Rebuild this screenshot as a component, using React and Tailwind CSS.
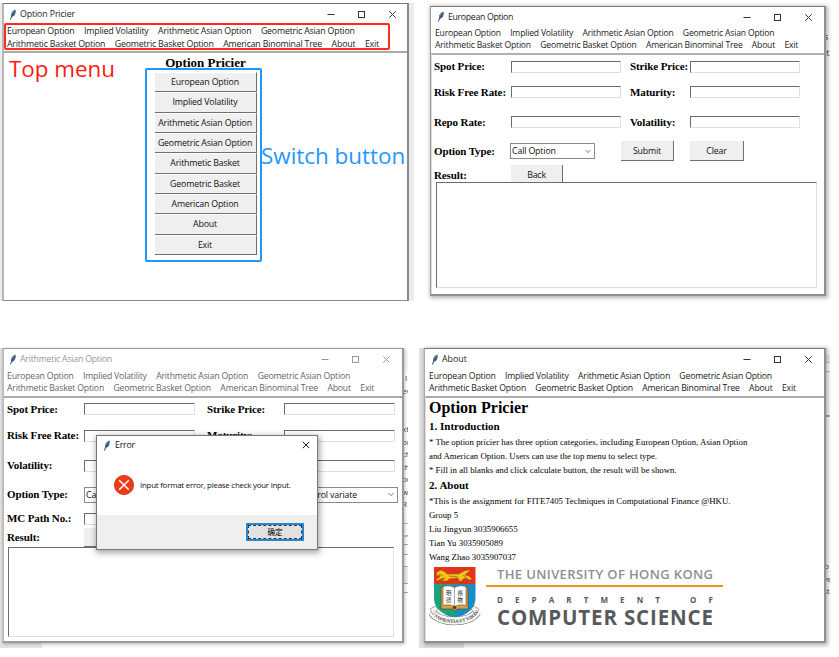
import React from "react";

const SANS = "font-['Open_Sans','Noto_Sans',sans-serif]";

function Feather() {
  return (
    <svg viewBox="0 0 8 12" className="h-[11px] w-[8px] shrink-0">
      <path d="M1.2 11.5 L2 8.5 C1 5 3.5 1.5 6.8 0.6 C7.6 4 6 8 2.6 8.8 Z" fill="#3f6288" />
      <path d="M2.4 8.6 C1.8 5 3.6 2.6 6 1.2 C4.6 3.4 3.6 5.6 2.4 8.6Z" fill="#9dbbd8" />
      <path d="M1.2 11.6 L2.3 8.2 L5 3" stroke="#1d2c40" strokeWidth="0.8" fill="none" />
    </svg>
  );
}

function Controls({ tone, className }) {
  return (
    <svg viewBox="0 0 72 10" className={`h-[10px] w-[72px] shrink-0 ${className}`} fill="none" stroke={tone} strokeWidth="1">
      <path d="M0.5 5.5h7" />
      <rect x="31.5" y="2.5" width="6" height="6" />
      <path d="M62.3 2.3l6.4 6.4M68.7 2.3l-6.4 6.4" />
    </svg>
  );
}

function TitleBar({ title, tone = "#333", className, controls, text }) {
  return (
    <div className={`flex items-center ${className}`}>
      <Feather />
      <span className={`ml-[3px] text-[8.8px] leading-3 whitespace-nowrap ${text}`}>{title}</span>
      <Controls tone={tone} className={`ml-auto ${controls}`} />
    </div>
  );
}

const MENU = [
  ["European Option", "Implied Volatility", "Arithmetic Asian Option", "Geometric Asian Option"],
  ["Arithmetic Basket Option", "Geometric Basket Option", "American Binominal Tree", "About", "Exit"],
];

function Menu({ className, row }) {
  return (
    <div className={`flex flex-col tracking-[-0.19px] whitespace-nowrap ${className}`}>
      {MENU.map((items, i) => (
        <div key={i} className={`flex ${row}`}>
          {items.map((m) => (
            <span key={m}>{m}</span>
          ))}
        </div>
      ))}
    </div>
  );
}

function Entry({ className = "w-[110px]" }) {
  return (
    <div className={`h-[12px] shrink-0 border border-t-[#6c6c6c] border-l-[#6c6c6c] border-r-[#e0e0e0] border-b-[#e0e0e0] bg-white ${className}`} />
  );
}

function Select({ label, className }) {
  return (
    <div className={`flex h-[16px] shrink-0 items-center justify-between border border-[#8a8a8a] bg-white pr-[3px] pl-[1px] text-[8.8px] leading-3 tracking-[-0.15px] whitespace-nowrap text-[#111] ${SANS} ${className}`}>
      <span>{label}</span>
      <svg viewBox="0 0 7 5" className="h-[5px] w-[6px]" fill="none" stroke="#666">
        <path d="M0.7 0.8L3.5 3.8L6.3 0.8" />
      </svg>
    </div>
  );
}

function Btn({ children, className }) {
  return (
    <div className={`flex shrink-0 items-center justify-center border-r border-b border-[#707070] bg-[#efefef] text-[8.8px] leading-3 tracking-[-0.17px] whitespace-nowrap text-[#111] ${SANS} ${className}`}>
      {children}
    </div>
  );
}

function Label({ children, className }) {
  return (
    <span className={`shrink-0 font-['Liberation_Serif',serif] text-[11px] leading-[13px] font-bold tracking-[-0.12px] whitespace-nowrap text-black ${className}`}>
      {children}
    </span>
  );
}

function HomeWindow() {
  const buttons = ["European Option", "Implied Volatility", "Arithmetic Asian Option", "Geometric Asian Option", "Arithmetic Basket", "Geometric Basket", "American Option", "About", "Exit"];
  return (
    <section className="absolute top-[3px] left-0 h-[298px] w-[414px] bg-[#ececec] pr-[5px] pl-[2px]">
      <div className="flex h-full flex-col border-t border-r-2 border-b border-l-2 border-t-[#777] border-r-[#8a8a8a] border-b-[#8a8a8a] border-l-[#b5b5b5] bg-white">
        <TitleBar title="Option Pricier" className="h-[20px] pl-[5px]" controls="mr-[8px]" text="text-[#222] tracking-[-0.12px]" />
        <Menu className="h-[27px] pt-px pl-[3px] text-[8.8px] text-[#222]" row="h-[13px] items-center gap-[9.5px]" />
        <div className="flex flex-1 flex-col items-center border-t-2 border-[#aaa]">
          <h1 className="mt-[2px] font-['Liberation_Serif',serif] text-[13px] leading-[16px] font-bold">Option Pricier</h1>
          <div className="mt-px flex flex-col">
            {buttons.map((b) => (
              <Btn key={b} className="h-[20.33px] w-[102px] border-t border-t-white">{b}</Btn>
            ))}
          </div>
        </div>
      </div>
      <div className="absolute top-[20px] left-[4px] h-[27px] w-[386px] rounded-[2px] border-2 border-[#fb2b20]" />
      <div className="absolute top-[65px] left-[145px] h-[194px] w-[117px] rounded-[2px] border-2 border-[#1e98ff]" />
      <span className="absolute top-[51px] left-[9px] text-[22.4px] leading-[30px] whitespace-nowrap text-[#ff1b10]">Top menu</span>
      <span className="absolute top-[138px] left-[261px] text-[22.4px] leading-[30px] whitespace-nowrap text-[#1e98ff]">Switch button</span>
    </section>
  );
}

function EuropeanWindow() {
  const rows = [
    ["Spot Price:", "Strike Price:", "h-[23px]"],
    ["Risk Free Rate:", "Maturity:", "h-[28px]"],
    ["Repo Rate:", "Volatility:", "h-[32px]"],
  ];
  return (
    <section className="absolute top-[6px] left-[430px] flex h-[290px] w-[396px] flex-col border-t border-r-2 border-b-2 border-l border-t-[#777] border-r-[#909090] border-b-[#909090] border-l-[#999] bg-white shadow-[1px_1px_4px_1px_rgba(0,0,0,0.3)]">
      <TitleBar title="European Option" className="h-[19px] pl-[6px]" controls="mr-[9px]" text="text-[#222] tracking-[-0.35px]" />
      <Menu className="h-[27px] pt-px pl-[4px] text-[8.6px] text-[#222]" row="h-[12.3px] items-center gap-[9.3px]" />
      <div className="flex flex-1 flex-col border-t-2 border-l border-t-[#b0b0b0] border-l-[#ddd] pl-[2px]">
        {rows.map(([a, b, h]) => (
          <div key={a} className={`flex items-center ${h}`}>
            <Label className="w-[77px]">{a}</Label>
            <Entry />
            <Label className="ml-[9px] w-[60px]">{b}</Label>
            <Entry />
          </div>
        ))}
        <div className="flex h-[26px] items-center">
          <Label className="w-[76px]">Option Type:</Label>
          <Select label="Call Option" className="w-[85px]" />
          <Btn className="ml-[26px] h-[20px] w-[53px]">Submit</Btn>
          <Btn className="ml-[16px] h-[20px] w-[54px]">Clear</Btn>
        </div>
        <div className="flex h-[18px] items-start">
          <Label className="w-[77px] pt-[5px]">Result:</Label>
          <Btn className="mt-px h-[20px] w-[52px]">Back</Btn>
        </div>
        <div className="relative ml-[2px] h-[106px] w-[381px] border border-t-[#6c6c6c] border-r-[#e0e0e0] border-b-[#e0e0e0] border-l-[#6c6c6c] bg-white" />
      </div>
    </section>
  );
}

function ErrorDialog() {
  return (
    <div className="absolute top-[87px] left-[96px] flex h-[115px] w-[222px] flex-col border border-[#777] bg-white shadow-[1px_2px_6px_1px_rgba(0,0,0,0.35)]">
      <div className="flex h-[18px] items-center pr-[7px] pl-[6px]">
        <Feather />
        <span className="ml-[4px] text-[8.8px] leading-3 tracking-[-0.2px] text-[#111]">Error</span>
        <svg viewBox="0 0 8 8" className="ml-auto h-[8px] w-[8px]" stroke="#222" fill="none">
          <path d="M0.8 0.8l6.4 6.4M7.2 0.8L0.8 7.2" />
        </svg>
      </div>
      <div className="flex h-[61px] items-center pl-[17px]">
        <svg viewBox="0 0 20 20" className="h-[20px] w-[20px]">
          <circle cx="10" cy="10" r="9.6" fill="#f03a17" stroke="#b92c12" strokeWidth="0.8" />
          <path d="M5.2 5.2l9.6 9.6M14.8 5.2l-9.6 9.6" stroke="#fff" strokeWidth="1.5" />
        </svg>
        <span className="ml-[6px] text-[7.9px] leading-3 tracking-[-0.23px] whitespace-nowrap text-[#111]">Input format error, please check your input.</span>
      </div>
      <div className="flex flex-1 items-center justify-end bg-[#efefef] pr-[13px]">
        <div className="h-[18px] w-[58px] border-2 border-[#2586d3] bg-[#e1e1e1]">
          <div className="flex h-full items-center justify-center border border-dashed border-[#333] font-['Noto_Sans_CJK_SC',sans-serif] text-[7.5px] leading-3 text-black">确定</div>
        </div>
      </div>
    </div>
  );
}

function AsianWindow() {
  const rows = [
    ["Spot Price:", "Strike Price:", "h-[22px]"],
    ["Risk Free Rate:", "Maturity:", "h-[31px]"],
    ["Volatility:", "", "h-[29px]"],
  ];
  return (
    <section className="absolute top-[348px] left-0 h-[300px] w-[408px]">
      <div className="flex h-full">
        <div className="h-full w-[42px] bg-[#e2e2e2]" />
        <div className="h-full flex-1 bg-[#f8f8f8]" />
      </div>
      <div className="absolute top-[22px] left-[402px] flex h-[278px] w-[6px] flex-col overflow-hidden bg-white text-[8px] leading-[12.5px] text-[#444]">
        <span className="pt-[2px] pl-[3px]">I</span>
        <span>ev</span>
        <span className="mt-[26px]">xt</span>
        <span>or</span>
        <span>ch</span>
        <span>th</span>
        <span>or</span>
        <span>w</span>
        <span>R</span>
        <div className="mt-[12px] h-[10px] border-t border-[#bbb]" />
        <div className="h-[11px] text-[4px] leading-[5px]">son</div>
        <div className="h-[10px] border-t border-[#aaa]" />
        <div className="h-[12px] border-t border-[#aaa]" />
        <div className="h-[18px] border-y border-[#aaa] bg-[#eee]" />
        <div className="h-[9px] border-b border-[#aaa]" />
      </div>
      <div className="absolute top-0 left-[2px] flex h-[295px] w-[402px] flex-col border-t border-r-2 border-b-2 border-l-2 border-t-[#999] border-r-[#9a9a9a] border-b-[#9a9a9a] border-l-[#bdbdbd] bg-white shadow-[1px_1px_3px_0px_rgba(0,0,0,0.25)]">
        <TitleBar title="Arithmetic Asian Option" tone="#999" className="h-[20px] pl-[5px]" controls="mr-[9px]" text="text-[#999] tracking-[-0.25px]" />
        <Menu className="h-[27px] pt-px pl-[3px] text-[8.7px] text-[#666]" row="h-[12.6px] items-center gap-[9.4px]" />
        <div className="flex flex-1 flex-col border-t-2 border-[#aaa] pl-[3px]">
          {rows.map(([a, b, h]) => (
            <div key={a} className={`flex items-center ${h}`}>
              <Label className="w-[77px]">{a}</Label>
              <Entry className="w-[111px]" />
              <Label className="ml-[12px] w-[77px]">{b}</Label>
              <Entry className="w-[111px]" />
            </div>
          ))}
          <div className="flex h-[29px] items-center">
            <Label className="w-[77px]">Option Type:</Label>
            <Select label="Call Option" className="w-[85px]" />
            <Select label="No control variate" className="ml-[115px] w-[114px]" />
          </div>
          <div className="flex h-[19px] items-center">
            <Label className="w-[77px]">MC Path No.:</Label>
            <Entry className="w-[111px]" />
            <Btn className="ml-[69px] h-[20px] w-[54px]">Clear</Btn>
          </div>
          <div className="flex h-[19px] items-center">
            <Label className="w-[77px]">Result:</Label>
            <Btn className="h-[19px] w-[53px]">Back</Btn>
          </div>
          <div className="ml-px h-[90px] w-[386px] border border-t-[#6c6c6c] border-r-[#e0e0e0] border-b-[#e0e0e0] border-l-[#6c6c6c]" />
        </div>
      </div>
      <ErrorDialog />
    </section>
  );
}

function Crest() {
  return (
    <svg viewBox="0 0 52 60" className="h-[60px] w-[52px] shrink-0">
      <path d="M5 18H26V52C14 49 5 43 5 32Z" fill="#16a583" />
      <path d="M26 18H46.5V32C46.5 43 38 49 26 52Z" fill="#168fc9" />
      <path d="M5 1H46.5V18H5Z" fill="#e5321d" />
      <path d="M8 6l4-2 4 2 2 2h12l5-3 4-1 3 1-3 1-3 3 4 1 3 3-2 1-5-2-3 2 1 1h-4l-1-3-9 1-2 2h-5l3-3-4 1-4 2-1-2 4-2-1-2-3 1z" fill="#f5c518" stroke="#8d5c12" strokeWidth="0.5" />
      <path d="M30 6l-5-2-4 1M10 8l4 2M34 9l4 3M20 10l9 1" stroke="#7d4b12" strokeWidth="0.6" fill="none" />
      <path d="M12 21H39V43H28L26 45L23 43H12Z" fill="#d9a034" stroke="#5c421c" strokeWidth="0.6" />
      <path d="M14 20.5C18 19.5 22 19.5 25.5 21.500C29 19.5 33 19.5 37 20.5V39.5C33 38.500 29 38.500 25.5 40.500C22 38.500 18 38.500 14 39.500Z" fill="#fff" stroke="#555" strokeWidth="0.6" />
      <path d="M25.5 21.5V40.5" stroke="#888" strokeWidth="0.7" />
      <g fontFamily="Noto Sans CJK TC, sans-serif" fontSize="5.4" fill="#222">
        <text x="17" y="28.500">明</text>
        <text x="17" y="36">德</text>
        <text x="28.500" y="28.500">格</text>
        <text x="28.500" y="36">物</text>
      </g>
      <circle cx="25.5" cy="41.5" r="1.8" fill="#6e3a17" />
      <path d="M3 46C10 58 41 58 48 46" fill="none" stroke="#777" strokeWidth="8.5" />
      <path d="M3 46C10 58 41 58 48 46" fill="none" stroke="#f7f7f4" strokeWidth="7.3" />
      <path d="M1 43l5-3 3 3-5 6zM50 43l-5-3-3 3 5 6z" fill="#f3f3ee" stroke="#777" strokeWidth="0.6" />
      <path id="mottoLine" d="M3 48C11 60 40 60 49 47" fill="none" />
      <text fontFamily="Liberation Serif, serif" fontSize="4.8" fontWeight="bold" fill="#444">
        <textPath href="#mottoLine" startOffset="3">SAPIENTIA ET VIRTVS</textPath>
      </text>
    </svg>
  );
}

function AboutWindow() {
  const body = "font-['Liberation_Serif',serif] text-[8.8px] leading-[14px] tracking-[0.01px] whitespace-nowrap text-black";
  const head = "font-['Liberation_Serif',serif] text-[11px] leading-[17px] font-bold text-black";
  return (
    <section className="absolute top-[348px] left-[419px] h-[300px] w-[411px]">
      <div className="flex h-full">
        <div className="h-full w-[45px] bg-[#e2e2e2]" />
        <div className="h-full flex-1 bg-[#fafafa]" />
      </div>
      <div className="absolute top-0 left-[404px] flex h-[296px] w-[7px] flex-col overflow-hidden bg-white text-[8px] leading-[12.5px] text-[#444]">
        <div className="mt-[7px] h-[8px] border-b border-[#ccc] bg-[#eee]" />
        <div className="h-[9px] border-b border-[#bbb]" />
        <div className="h-[45px] border-b-2 border-[#aaa] bg-[#fafafa]" />
        <span className="mt-[143px] pl-px">b</span>
        <span>ve</span>
        <span>st</span>
      </div>
      <div className="absolute top-0 left-[5px] flex h-[295px] w-[402px] flex-col border-t border-r-2 border-b-2 border-l border-t-[#777] border-r-[#909090] border-b-[#909090] border-l-[#aaa] bg-white shadow-[1px_1px_4px_1px_rgba(0,0,0,0.3)]">
        <TitleBar title="About" className="h-[20px] pl-[6px]" controls="mr-[9px]" text="text-[#222]" />
        <Menu className="h-[27px] pt-px pl-[4px] text-[8.7px] text-[#222]" row="h-[12.6px] items-center gap-[9.3px]" />
        <div className="flex flex-1 flex-col border-t-2 border-l border-t-[#aaa] border-l-[#ddd] pl-[3px]">
          <h1 className="font-['Liberation_Serif',serif] text-[16px] leading-[20px] font-bold text-black">Option Pricier</h1>
          <h2 className={head}>1. Introduction</h2>
          <p className={body}>* The option pricier has three option categories, including European Option, Asian Option</p>
          <p className={body}>and American Option. Users can use the top menu to select type.</p>
          <p className={body}>* Fill in all blanks and click calculate button, the result will be shown.</p>
          <h2 className={head}>2. About</h2>
          <p className={body}>*This is the assignment for FITE7405 Techniques in Computational Finance @HKU.</p>
          <p className={body}>Group 5</p>
          <p className={body}>Liu Jingyun 3035906655</p>
          <p className={body}>Tian Yu 3035905089</p>
          <p className={body}>Wang Zhao 3035907037</p>
          <div className="flex pt-[2px]">
            <Crest />
            <div className="ml-[5px] flex flex-col whitespace-nowrap">
              <span className="mt-px pl-[11px] text-[13px] leading-[15px] font-semibold tracking-[0.37px] text-[#8d8f93]">THE UNIVERSITY OF HONG KONG</span>
              <div className="mt-[3px] h-[2px] w-[237px] bg-[#f3921e]" />
              <div className="mt-[8px] ml-[11px] flex w-[216px] justify-between text-[8px] leading-[10px] font-bold text-[#58595b]">
                {"DEPARTMENT".split("").map((c, i) => (
                  <span key={i}>{c}</span>
                ))}
                <span className="w-[6px]" />
                <span>O</span>
                <span>F</span>
              </div>
              <span className="mt-px pl-[11px] text-[20.5px] leading-[22px] font-bold tracking-[0.85px] text-[#58595b]">COMPUTER SCIENCE</span>
            </div>
          </div>
        </div>
      </div>
    </section>
  );
}

export default function App() {
  return (
    <main className={`relative h-[657px] w-[839px] overflow-hidden bg-white ${SANS}`}>
      <HomeWindow />
      <div className="absolute top-[29px] left-[824px] flex w-[6px] flex-col overflow-hidden text-[9px] leading-[16px] text-[#333]">
        <span>s</span>
        <span>it</span>
      </div>
      <EuropeanWindow />
      <AsianWindow />
      <AboutWindow />
    </main>
  );
}
